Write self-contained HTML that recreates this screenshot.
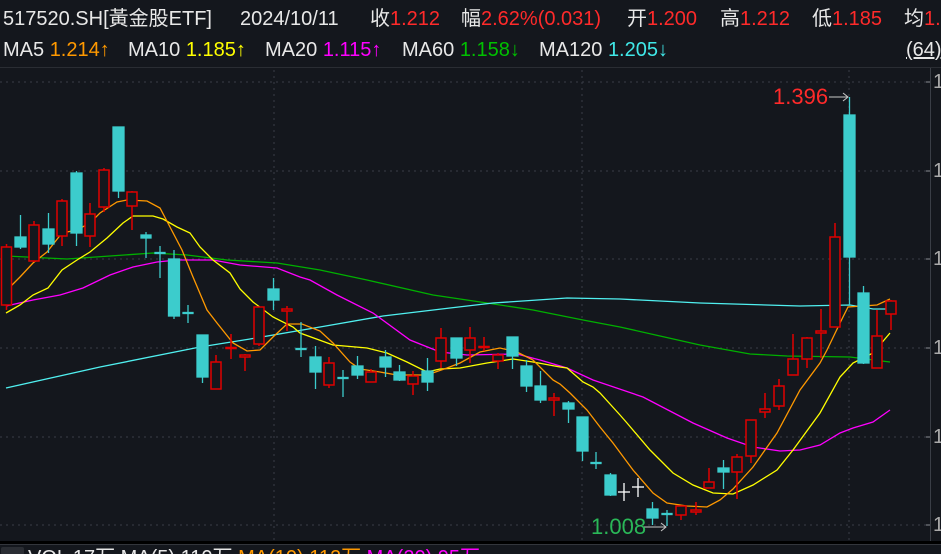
<!DOCTYPE html>
<html><head><meta charset="utf-8"><style>
html,body{margin:0;padding:0;background:#14171d;width:941px;height:554px;overflow:hidden}
#w{position:relative;width:941px;height:554px;overflow:hidden}
.t{position:absolute;font-family:"Liberation Sans","Noto Sans CJK SC",sans-serif;font-size:20px;color:#e8e8e8;white-space:pre;line-height:24px}
.r{color:#ff2a2a}.o{color:#ff9900}.y{color:#ffff00}.m{color:#ff00ff}.g{color:#00c000}.c{color:#40e8e8}
.b{font-size:22px}
</style></head><body><div id="w">
<svg width="941" height="554" style="position:absolute;left:0;top:0">
<g stroke="#3a3e46" stroke-width="1" stroke-dasharray="2,4">
<line x1="0" y1="82" x2="930" y2="82"/><line x1="0" y1="171" x2="930" y2="171"/>
<line x1="0" y1="259" x2="930" y2="259"/><line x1="0" y1="348" x2="930" y2="348"/>
<line x1="0" y1="437" x2="930" y2="437"/><line x1="0" y1="525" x2="930" y2="525"/>
<line x1="274" y1="70" x2="274" y2="541"/><line x1="582" y1="70" x2="582" y2="541"/><line x1="849" y1="70" x2="849" y2="541"/>
</g>
<line x1="0" y1="67.5" x2="941" y2="67.5" stroke="#2a2d33"/>
<line x1="930.5" y1="68" x2="930.5" y2="541" stroke="#3a3e46"/>
<g stroke="#8a8d94"><line x1="926" y1="82" x2="930" y2="82"/><line x1="926" y1="171" x2="930" y2="171"/><line x1="926" y1="259" x2="930" y2="259"/><line x1="926" y1="348" x2="930" y2="348"/><line x1="926" y1="437" x2="930" y2="437"/><line x1="926" y1="525" x2="930" y2="525"/></g>
<rect x="0" y="541" width="941" height="3" fill="#000"/>
<line x1="0" y1="544.5" x2="941" y2="544.5" stroke="#33363c"/>
<rect x="1" y="547" width="23" height="8" rx="2" fill="#2a2d33"/>
<g fill="none" stroke-width="1.3">
<polyline stroke="#00b000" points="6,256 67,259 110,256 153,253 187,255 227,260 277,263 320,270 367,280 433,295 487,303 533,310 583,320 620,327 660,336 700,345 750,354 787,356 850,357 890,362"/>
<polyline stroke="#50f0f0" points="6,388 100,367 200,347 250,339 320,327 383,316 450,308 493,303 567,298 620,299 700,303 800,306 850,305 873,309 890,309"/>
<polyline stroke="#ff00ff" points="6,306 33,300 60,295 83,288 110,275 133,267 157,262 177,260 213,260 240,265 277,268 300,277 310,280 337,295 373,313 410,340 440,352 467,355 517,354 540,360 567,368 593,380 643,397 693,423 727,438 753,447 780,451 800,450 820,445 840,433 853,428 873,422 890,410"/>
<polyline stroke="#ffff00" points="6,313 20,305 33,295 48,288 62,270 77,260 90,252 107,238 123,223 133,216 153,216 163,219 177,227 190,233 200,247 213,260 230,273 240,289 253,302 273,317 293,327 300,333 333,345 367,348 387,353 407,362 427,372 440,369 460,368 487,363 513,359 533,362 560,367 567,368 583,382 593,387 600,393 620,415 627,423 650,450 673,473 693,485 713,493 733,494 753,485 777,470 793,450 820,413 840,377 853,363 873,353 890,333"/>
<polyline stroke="#ff9900" points="6,291 20,277 33,263 47,252 62,233 77,230 90,223 100,213 117,202 127,200 147,201 160,208 170,227 182,250 193,277 207,310 217,323 233,343 247,351 260,350 273,337 287,324 302,324 320,331 333,343 350,362 360,369 380,372 397,375 427,375 447,368 460,363 480,352 500,348 517,352 533,360 553,380 560,384 570,393 587,410 600,427 613,443 633,470 653,493 667,503 687,506 707,507 720,500 733,489 753,467 777,433 800,390 820,363 827,350 840,323 848,307 877,305 890,299"/>
</g>
<g stroke="#e00000" stroke-width="1.5" fill="#14171d">
<line x1="6.5" y1="244" x2="6.5" y2="310"/><rect x="1.5" y="247" width="10" height="58"/>
<line x1="34" y1="221" x2="34" y2="262"/><rect x="29" y="225" width="10" height="36"/>
<line x1="62" y1="199" x2="62" y2="246"/><rect x="57" y="201" width="10" height="35"/>
<line x1="90" y1="203" x2="90" y2="247"/><rect x="85" y="214" width="10" height="22"/>
<line x1="104" y1="168" x2="104" y2="212"/><rect x="99" y="170" width="10" height="37"/>
<line x1="132" y1="191" x2="132" y2="230"/><rect x="127" y="192" width="10" height="14"/>
<line x1="216" y1="355" x2="216" y2="389"/><rect x="211" y="362" width="10" height="27"/>
<line x1="231" y1="334" x2="231" y2="359"/><rect x="226" y="347.5" width="10" height="1"/>
<line x1="245" y1="354" x2="245" y2="371"/><rect x="240" y="355" width="10" height="2"/>
<line x1="259" y1="307" x2="259" y2="346"/><rect x="254" y="307" width="10" height="37"/>
<line x1="287" y1="306" x2="287" y2="331"/><rect x="282" y="309" width="10" height="2"/>
<line x1="329" y1="357" x2="329" y2="388"/><rect x="324" y="363" width="10" height="22"/>
<line x1="371" y1="369" x2="371" y2="382"/><rect x="366" y="372" width="10" height="10"/>
<line x1="413" y1="371" x2="413" y2="395"/><rect x="408" y="376" width="10" height="8"/>
<line x1="441" y1="328" x2="441" y2="368"/><rect x="436" y="338" width="10" height="23"/>
<line x1="470" y1="327" x2="470" y2="363"/><rect x="465" y="338" width="10" height="12"/>
<line x1="484" y1="337" x2="484" y2="351"/><rect x="479" y="346.5" width="10" height="1"/>
<line x1="498" y1="353" x2="498" y2="369"/><rect x="493" y="355" width="10" height="6"/>
<line x1="554" y1="393" x2="554" y2="416"/><rect x="549" y="398" width="10" height="2"/>
<line x1="681" y1="506" x2="681" y2="520"/><rect x="676" y="506" width="10" height="9"/>
<line x1="696" y1="502" x2="696" y2="515"/><rect x="691" y="510" width="10" height="2"/>
<line x1="709" y1="468" x2="709" y2="488"/><rect x="704" y="482" width="10" height="6"/>
<line x1="737" y1="454" x2="737" y2="499"/><rect x="732" y="457" width="10" height="15"/>
<line x1="751" y1="420" x2="751" y2="463"/><rect x="746" y="420" width="10" height="36"/>
<line x1="765" y1="393" x2="765" y2="418"/><rect x="760" y="409" width="10" height="3"/>
<line x1="779" y1="379" x2="779" y2="410"/><rect x="774" y="386" width="10" height="20"/>
<line x1="793" y1="334" x2="793" y2="375"/><rect x="788" y="359" width="10" height="16"/>
<line x1="807" y1="337" x2="807" y2="368"/><rect x="802" y="338" width="10" height="21"/>
<line x1="821" y1="309" x2="821" y2="358"/><rect x="816" y="331" width="10" height="2"/>
<line x1="835" y1="223" x2="835" y2="327"/><rect x="830" y="237" width="10" height="90"/>
<line x1="877" y1="310" x2="877" y2="368"/><rect x="872" y="336" width="10" height="32"/>
<line x1="891" y1="300" x2="891" y2="330"/><rect x="886" y="301" width="10" height="13"/>
</g>
<g stroke="#3ccccc" stroke-width="1.3" fill="#3ccccc">
<line x1="20.5" y1="215" x2="20.5" y2="249"/><rect x="15" y="237" width="11" height="10"/>
<line x1="48.5" y1="213" x2="48.5" y2="253"/><rect x="43" y="229" width="11" height="15"/>
<line x1="76.5" y1="171" x2="76.5" y2="246"/><rect x="71" y="173" width="11" height="60"/>
<line x1="118.5" y1="127" x2="118.5" y2="198"/><rect x="113" y="127" width="11" height="64"/>
<line x1="146" y1="232" x2="146" y2="258"/><rect x="141" y="235" width="10" height="3"/>
<line x1="160" y1="246" x2="160" y2="278"/><rect x="155" y="252.5" width="10" height="1"/>
<line x1="174" y1="250" x2="174" y2="319"/><rect x="168.5" y="259" width="11" height="57"/>
<line x1="188" y1="305" x2="188" y2="323"/><rect x="183" y="312.5" width="10" height="1"/>
<line x1="202.5" y1="335" x2="202.5" y2="383"/><rect x="197" y="335" width="11" height="42"/>
<line x1="273.5" y1="278" x2="273.5" y2="310"/><rect x="268" y="289" width="11" height="11"/>
<line x1="301" y1="322" x2="301" y2="357"/><rect x="296" y="348.5" width="10" height="1"/>
<line x1="315.5" y1="346" x2="315.5" y2="389"/><rect x="310" y="357" width="11" height="15"/>
<line x1="343" y1="370" x2="343" y2="397"/><rect x="338" y="377.5" width="10" height="1"/>
<line x1="357.5" y1="356" x2="357.5" y2="379"/><rect x="352" y="366" width="11" height="9"/>
<line x1="385.5" y1="350" x2="385.5" y2="377"/><rect x="380" y="357" width="11" height="10"/>
<line x1="399.5" y1="365" x2="399.5" y2="381"/><rect x="394" y="372" width="11" height="8"/>
<line x1="427.5" y1="358" x2="427.5" y2="391"/><rect x="422" y="371" width="11" height="11"/>
<line x1="456.5" y1="338" x2="456.5" y2="366"/><rect x="451" y="338" width="11" height="20"/>
<line x1="512.5" y1="337" x2="512.5" y2="369"/><rect x="507" y="337" width="11" height="19"/>
<line x1="526.5" y1="360" x2="526.5" y2="392"/><rect x="521" y="366" width="11" height="20"/>
<line x1="540.5" y1="371" x2="540.5" y2="403"/><rect x="535" y="386" width="11" height="14"/>
<line x1="568.5" y1="401" x2="568.5" y2="423"/><rect x="563" y="403" width="11" height="6"/>
<line x1="582.5" y1="417" x2="582.5" y2="461"/><rect x="577" y="417" width="11" height="34"/>
<line x1="596" y1="452" x2="596" y2="469"/><rect x="591" y="462.5" width="10" height="1"/>
<line x1="610.5" y1="473" x2="610.5" y2="496"/><rect x="605" y="475" width="11" height="20"/>
<line x1="652.5" y1="502" x2="652.5" y2="525"/><rect x="647" y="509" width="11" height="9"/>
<line x1="667" y1="510" x2="667" y2="526"/><rect x="662" y="513.5" width="10" height="1"/>
<line x1="723.5" y1="460" x2="723.5" y2="489"/><rect x="718" y="468" width="11" height="4"/>
<line x1="849.5" y1="97" x2="849.5" y2="305"/><rect x="844" y="115" width="11" height="142"/>
<line x1="863.5" y1="286" x2="863.5" y2="364"/><rect x="858" y="293" width="11" height="70"/>
</g>
<g stroke="#ffffff" stroke-width="1.3">
<line x1="624" y1="483" x2="624" y2="501"/><line x1="618" y1="492" x2="630" y2="492"/>
<line x1="638" y1="478" x2="638" y2="497"/><line x1="632" y1="487" x2="644" y2="487"/>
</g>
<g stroke="#c8c8c8" stroke-width="1" fill="none">
<line x1="829" y1="97" x2="848" y2="97"/><polyline points="843,93 848,97 843,101"/>
<line x1="644" y1="527" x2="666" y2="527"/><polyline points="661,523 666,527 661,531"/>
</g>
</svg>
<div class="t" style="left:3px;top:7px">517520.SH[黃金股ETF]</div>
<div class="t" style="left:240px;top:7px">2024/10/11</div>
<div class="t" style="left:370px;top:7px">收<span class="r">1.212</span></div>
<div class="t" style="left:461px;top:7px">幅<span class="r">2.62%(0.031)</span></div>
<div class="t" style="left:627px;top:7px">开<span class="r">1.200</span></div>
<div class="t" style="left:720px;top:7px">高<span class="r">1.212</span></div>
<div class="t" style="left:812px;top:7px">低<span class="r">1.185</span></div>
<div class="t" style="left:904px;top:7px">均<span class="r">1.2</span></div>
<div class="t" style="left:3px;top:38px">MA5 <span class="o">1.214↑</span></div>
<div class="t" style="left:128px;top:38px">MA10 <span class="y">1.185↑</span></div>
<div class="t" style="left:265px;top:38px">MA20 <span class="m">1.115↑</span></div>
<div class="t" style="left:402px;top:38px">MA60 <span class="g">1.158↓</span></div>
<div class="t" style="left:539px;top:38px">MA120 <span class="c">1.205↓</span></div>
<div class="t" style="left:906px;top:38px;text-decoration:underline">(64)</div>
<div class="t r b" style="left:773px;top:85px">1.396</div>
<div class="t b" style="left:591px;top:515px;color:#2ab858">1.008</div>
<div class="t" style="left:933px;top:70px;color:#aaa">1</div>
<div class="t" style="left:933px;top:159px;color:#aaa">1</div>
<div class="t" style="left:933px;top:247px;color:#aaa">1</div>
<div class="t" style="left:933px;top:336px;color:#aaa">1</div>
<div class="t" style="left:933px;top:425px;color:#aaa">1</div>
<div class="t" style="left:933px;top:513px;color:#aaa">1</div>
<div class="t" style="left:28px;top:546px">VOL 17万 MA(5) 110万 <span class="o">MA(10) 112万</span> <span class="m">MA(20) 95万</span></div>
</div></body></html>
